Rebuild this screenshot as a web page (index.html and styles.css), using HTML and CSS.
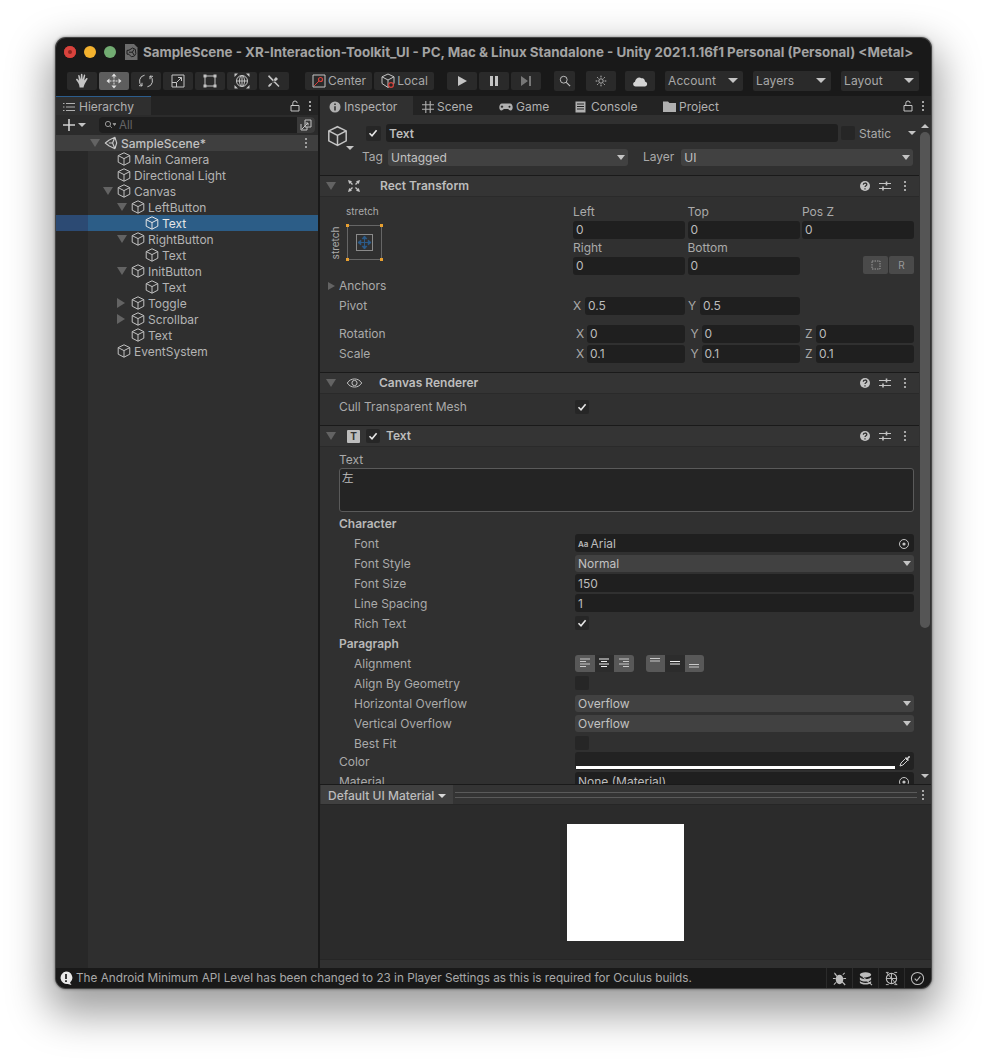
FILE: index.html
```html
<!DOCTYPE html>
<html lang="en">
<head>
<meta charset="utf-8">
<title>Unity Editor</title>
<link rel="stylesheet" href="styles.css">
</head>
<body>
<svg class="sprite" xmlns="http://www.w3.org/2000/svg">
  <symbol id="cube" viewBox="0 0 14 14"><path d="M7 .8 12.800 3.600V10.200L7 13.200 1.200 10.200V3.600ZM1.200 3.600 7 6.600 12.800 3.600M7 6.600V13.200" fill="none" stroke="currentColor" stroke-width="1"/></symbol>
  <symbol id="unity" viewBox="0 0 16 16"><path d="M1.500 8 6 4.500 12.500 1.500 14.500 8 12.500 14.500 6 11.500ZM5.500 8H9.800M9.800 8 12.500 1.500M9.800 8 12.500 14.500" fill="none" stroke="currentColor" stroke-width="1.300" stroke-linejoin="round"/></symbol>
  <symbol id="dots" viewBox="0 0 4 12"><circle cx="2" cy="2" r="1.100" fill="currentColor"/><circle cx="2" cy="6" r="1.100" fill="currentColor"/><circle cx="2" cy="10" r="1.100" fill="currentColor"/></symbol>
  <symbol id="lock" viewBox="0 0 10 12"><path d="M2.800 5V3.200a2.200 2.200 0 0 1 4.400 0M1 5.500h8v5.500H1Z" fill="none" stroke="currentColor" stroke-width="1"/></symbol>
  <symbol id="help" viewBox="0 0 12 12"><circle cx="6" cy="6" r="5" fill="currentColor"/><path d="M4.300 4.700c0-2.200 3.500-2.200 3.500-.2 0 1.300-1.800 1.300-1.800 2.600M6 8.200v1.200" fill="none" stroke="#333" stroke-width="1.300"/></symbol>
  <symbol id="sliders" viewBox="0 0 12 12"><path d="M0 3.500h12M0 8.500h12" stroke="currentColor" stroke-width="1"/><path d="M7.500 1.500v4M4 6.500v4" stroke="currentColor" stroke-width="1.600"/></symbol>
  <symbol id="check" viewBox="0 0 14 14"><path d="M3.500 7.300 6 9.800 10.600 4.200" fill="none" stroke="currentColor" stroke-width="1.600"/></symbol>
</svg>

<main class="window">
  <header class="titlebar">
    <div class="lights"><span class="light red"></span><span class="light yellow"></span><span class="light green"></span></div>
    <svg class="doc" viewBox="0 0 14 16"><path d="M1 0H10L13.500 3.500V16H1Z" fill="#6c6c6c"/><path d="M8.600 4 11.400 5.400 11.800 9.600 10.400 12 7.400 12.800 4.800 10.200H3V6.400L5 6.200ZM5 8.200H8.400L10 5.400M8.400 8.200 10 11" fill="none" stroke="#1d1d1d" stroke-width="1"/></svg>
    <h1 class="wintitle">SampleScene - XR-Interaction-Toolkit_UI - PC, Mac &amp; Linux Standalone - Unity 2021.1.16f1 Personal (Personal) &lt;Metal&gt;</h1>
  </header>

  <nav class="toolbar">
    <div class="toolgroup">
      <button class="tool"><svg viewBox="0 0 16 16" class="ti"><path d="M4 9.500 2.200 7C1.600 6 3 5.400 3.700 6.200L5 7.800 4.200 2.800C4 1.800 5.400 1.600 5.600 2.600L6.600 6.600 6.900 1.500C7 .5 8.400 .5 8.400 1.500L8.600 6.600 9.800 2.200C10.100 1.200 11.400 1.600 11.200 2.600L10.200 7.400 12 5.400C12.800 4.600 14 5.400 13.400 6.300L10.800 10.800C10 12.500 9.600 13.500 9.600 14.600H5.600C5.400 12.600 5 11 4 9.500Z" fill="#c4c4c4"/></svg></button>
      <button class="tool active"><svg viewBox="0 0 16 16" class="ti"><path d="M8 3.500v9M3.500 8h9" stroke="#dcdcdc" stroke-width="1" stroke-dasharray="2 1"/><path d="M8 .5 5.500 3.500h5ZM8 15.500l-2.500-3h5ZM.5 8l3-2.500v5ZM15.500 8l-3-2.500v5Z" fill="#e2e2e2"/></svg></button>
      <button class="tool"><svg viewBox="0 0 16 16" class="ti"><path d="M6.600 2.200A6 6 0 0 0 4 13M9.400 13.800A6 6 0 0 0 12 3M12 3V6.200M12 3 15 3.400M4 13V9.800M4 13 1 12.600" fill="none" stroke="#c4c4c4" stroke-width="1"/></svg></button>
      <button class="tool"><svg viewBox="0 0 16 16" class="ti"><path d="M2 2H14V14H2ZM2 9.500H6.500V14M6.500 9.500 11.500 4.500M8 4.500H11.500V8" fill="none" stroke="#c4c4c4" stroke-width="1"/></svg></button>
      <button class="tool"><svg viewBox="0 0 16 16" class="ti"><path d="M3 3h10v10H3Z" fill="none" stroke="#c4c4c4" stroke-width="1"/><path d="M1.500 1.500h3v3h-3ZM11.500 1.500h3v3h-3ZM1.500 11.500h3v3h-3ZM11.500 11.500h3v3h-3Z" fill="#c4c4c4"/></svg></button>
      <button class="tool"><svg viewBox="0 0 16 16" class="ti"><circle cx="8" cy="8" r="5.500" fill="none" stroke="#c4c4c4"/><path d="M8 2.500v11M2.500 8h11M5.500 8a2.500 5.500 0 0 1 5 0M5.500 8a2.500 5.500 0 0 0 5 0" fill="none" stroke="#c4c4c4"/><path d="M12 .5h3.500V4ZM4 .5H.5V4ZM12 15.500h3.500V12ZM4 15.500H.5V12Z" fill="#c4c4c4"/></svg></button>
      <button class="tool"><svg viewBox="0 0 16 16" class="ti"><path d="M3 2 13.500 13 12.500 14 2 3.500ZM13.500 2.500 11 5 10 4 8.500 5.500 5 12.500 3 14 2 13 3.500 11 10.500 7.500 12 6 11 5Z" fill="#c4c4c4"/></svg></button>
    </div>
    <div class="pivotgroup">
      <button class="tool pivot center-btn"><svg viewBox="0 0 16 16" class="ti"><path d="M2 2h12v12H2Z" fill="none" stroke="#c4c4c4"/><path d="M3 13 8 8" stroke="#d8433d"/><circle cx="9.500" cy="6.500" r="2" fill="none" stroke="#d8433d" stroke-width="1.200"/></svg>Center</button>
      <button class="tool pivot local-btn"><svg viewBox="0 0 16 16" class="ti"><path d="M8 1 14 3.800V10.500L8 14.500 2 10.500V3.800ZM2 3.800 8 7 14 3.800M8 7v7" fill="none" stroke="#c4c4c4"/><circle cx="11" cy="12" r="2.400" fill="#242424" stroke="#d8433d" stroke-width="1.200"/></svg>Local</button>
    </div>
    <div class="playgroup">
      <button class="tool"><svg viewBox="0 0 12 12" class="pi"><path d="M2 1 11 6 2 11Z" fill="#c4c4c4"/></svg></button>
      <button class="tool"><svg viewBox="0 0 12 12" class="pi"><path d="M2 1h3v10H2ZM7 1h3v10H7Z" fill="#c4c4c4"/></svg></button>
      <button class="tool"><svg viewBox="0 0 12 12" class="pi"><path d="M1 1 8 6 1 11ZM9 1h2v10H9Z" fill="#777"/></svg></button>
    </div>
    <button class="tool search-btn"><svg viewBox="0 0 14 14" class="pi"><circle cx="5.500" cy="5.500" r="4" fill="none" stroke="#c4c4c4" stroke-width="1.100"/><path d="M8.500 8.500 13 13" stroke="#c4c4c4" stroke-width="1.300"/></svg></button>
    <button class="tool sun-btn"><svg viewBox="0 0 14 14" class="pi"><circle cx="7" cy="7" r="2.600" fill="none" stroke="#c4c4c4"/><path d="M7 .8v2M7 11.200v2M.8 7h2M11.200 7h2M2.600 2.600 4 4M10 10l1.400 1.400M2.600 11.400 4 10M10 4l1.400-1.400" stroke="#c4c4c4" stroke-width="1.100"/></svg></button>
    <button class="tool cloud-btn"><svg viewBox="0 0 16 12" class="ci"><path d="M3.600 11.500C.8 11.500 .2 7.500 3 6.800 3.400 3.400 6.800 1.600 9.400 3.200 12.800 2.800 13 6 13 6.600 16 7.200 15.800 11.500 12.800 11.500Z" fill="#d4d4d4"/></svg></button>
    <div class="tool menu account"><span>Account</span><i class="caret"></i></div>
    <div class="tool menu layers"><span>Layers</span><i class="caret"></i></div>
    <div class="tool menu layout"><span>Layout</span><i class="caret"></i></div>
  </nav>

  <div class="panels">
    <section class="hierarchy">
      <div class="tabs">
        <div class="tab tab-h selected-tab">
          <svg viewBox="0 0 12 10" class="tabicon"><path d="M3 1.500h9M3 5h9M3 8.500h9" stroke="currentColor"/><path d="M0 1h1.500v1H0ZM0 4.500h1.500v1H0ZM0 8h1.500v1H0Z" fill="currentColor"/></svg>Hierarchy
        </div>
        <div class="tabspace"></div>
        <svg class="lockicon"><use href="#lock"/></svg>
        <svg class="dotsicon"><use href="#dots"/></svg>
      </div>
      <div class="hbar">
        <svg viewBox="0 0 12 12" class="plus"><path d="M6 0v12M0 6h12" stroke="#d0d0d0" stroke-width="1.600"/></svg>
        <i class="caret small"></i>
        <div class="hsearch">
          <svg viewBox="0 0 12 10" class="mag"><circle cx="4" cy="4" r="2.600" fill="none" stroke="#999"/><path d="M6 6 8 8M9 3.500h3L10.500 5.500Z" stroke="#999" fill="#999" stroke-width=".8"/></svg>
          <span class="hplace">All</span>
          <span class="hsearchbtn"><svg viewBox="0 0 12 12"><path d="M1 5v6h6V8M5 8V1h6v7ZM2 10 8 4M8 4H5.600M8 4v2.400" fill="none" stroke="#c4c4c4"/></svg></span>
        </div>
      </div>
      <div class="scene-row">
        <i class="arrow-d dim"></i>
        <svg class="uicon"><use href="#unity"/></svg>
        <span>SampleScene*</span>
        <svg class="scene-dots"><use href="#dots"/></svg>
      </div>
      <div class="tree">
        <div class="node l1"><i class="slot"></i><svg class="cube"><use href="#cube"/></svg><span>Main Camera</span></div>
        <div class="node l1"><i class="slot"></i><svg class="cube"><use href="#cube"/></svg><span>Directional Light</span></div>
        <div class="node l1"><i class="slot"><i class="arrow-d"></i></i><svg class="cube"><use href="#cube"/></svg><span>Canvas</span></div>
        <div class="node l2"><i class="slot"><i class="arrow-d"></i></i><svg class="cube"><use href="#cube"/></svg><span>LeftButton</span></div>
        <div class="node l3 sel"><i class="slot"></i><svg class="cube"><use href="#cube"/></svg><span>Text</span></div>
        <div class="node l2"><i class="slot"><i class="arrow-d"></i></i><svg class="cube"><use href="#cube"/></svg><span>RightButton</span></div>
        <div class="node l3"><i class="slot"></i><svg class="cube"><use href="#cube"/></svg><span>Text</span></div>
        <div class="node l2"><i class="slot"><i class="arrow-d"></i></i><svg class="cube"><use href="#cube"/></svg><span>InitButton</span></div>
        <div class="node l3"><i class="slot"></i><svg class="cube"><use href="#cube"/></svg><span>Text</span></div>
        <div class="node l2"><i class="slot"><i class="arrow-r"></i></i><svg class="cube"><use href="#cube"/></svg><span>Toggle</span></div>
        <div class="node l2"><i class="slot"><i class="arrow-r"></i></i><svg class="cube"><use href="#cube"/></svg><span>Scrollbar</span></div>
        <div class="node l2"><i class="slot"></i><svg class="cube"><use href="#cube"/></svg><span>Text</span></div>
        <div class="node l1"><i class="slot"></i><svg class="cube"><use href="#cube"/></svg><span>EventSystem</span></div>
      </div>
    </section>

    <section class="rightpanel">
      <div class="tabs">
        <div class="tab tab-i selected-tab2">
          <svg viewBox="0 0 12 12" class="tabicon tabicon-i"><circle cx="6" cy="6" r="5.500" fill="currentColor"/><path d="M6 2.400v1.600M6 5.200v4.200" stroke="#333" stroke-width="1.600"/></svg>Inspector
        </div>
        <div class="tab tab-s"><svg viewBox="0 0 12 12" class="tabicon tabicon-i"><path d="M3.800 0v12M8.200 0v12M0 3.800h12M0 8.200h12" stroke="currentColor" stroke-width="1.100"/></svg>Scene</div>
        <div class="tab tab-g"><svg viewBox="0 0 14 8" class="gameicon"><path d="M3 .5h8c3.400 0 3.600 7 .6 7-1.400 0-1.600-1.600-3-1.600H5.400c-1.400 0-1.600 1.600-3 1.600C-.6 7.500-.4 .5 3 .5Z" fill="currentColor"/><path d="M3 2.500v2.500M1.800 3.700h2.400" stroke="#222"/><circle cx="10.500" cy="3.700" r="1" fill="#222"/></svg>Game</div>
        <div class="tab tab-c"><svg viewBox="0 0 11 12" class="tabicon tabicon-c"><path d="M.5 .5h10v11H.5Z" fill="currentColor"/><path d="M2 3h7M2 5.500h7M2 8h7" stroke="#222"/></svg>Console</div>
        <div class="tab tab-p"><svg viewBox="0 0 13 11" class="tabicon tabicon-p"><path d="M0 .5h5L6.500 2H13v9H0Z" fill="currentColor"/></svg>Project</div>
        <div class="tabspace"></div>
        <svg class="lockicon"><use href="#lock"/></svg>
        <svg class="dotsicon"><use href="#dots"/></svg>
      </div>

      <div class="inspector-wrap">
        <div class="inspector">
          <div class="objhead">
            <div class="objrow">
              <svg class="bigcube"><use href="#cube"/></svg>
              <span class="check on chk-obj"><svg><use href="#check"/></svg></span>
              <div class="field namefield strong">Text</div>
              <span class="check static-chk"></span>
              <span class="lbl static-lbl">Static</span>
              <i class="caret static-caret"></i>
            </div>
            <div class="tagrow">
              <i class="caret small bigcube-caret"></i>
              <span class="lbl tag-lbl">Tag</span>
              <div class="drop tagdrop"><span>Untagged</span><i class="caret"></i></div>
              <span class="lbl layer-lbl">Layer</span>
              <div class="drop layerdrop"><span>UI</span><i class="caret"></i></div>
            </div>
          </div>

          <div class="comphead">
            <i class="arrow-d dim"></i>
            <svg viewBox="0 0 14 14" class="compicon"><path d="M1 1 5 2.200 2.200 5ZM13 1 11.800 5 9 2.200ZM1 13 2.200 9 5 11.800ZM13 13 9 11.800 11.800 9Z" fill="#c4c4c4"/><path d="M3 3 5.500 5.500M11 3 8.500 5.500M3 11 5.500 8.500M11 11 8.500 8.500" stroke="#c4c4c4" stroke-width="1.400"/></svg>
            <span class="comptitle">Rect Transform</span>
            <svg class="hicon"><use href="#help"/></svg><svg class="hicon sl"><use href="#sliders"/></svg><svg class="hdots"><use href="#dots"/></svg>
          </div>
          <div class="rect-body">
            <div class="rect-top">
              <div class="anchor">
                <span class="stretch-h">stretch</span>
                <span class="stretch-v">stretch</span>
                <div class="anchorbox">
                  <i class="pin p1"></i><i class="pin p2"></i><i class="pin p3"></i><i class="pin p4"></i>
                  <div class="anchorinner"><svg viewBox="0 0 16 16"><path d="M8 1v14M1 8h14M8 1 5.500 4h5ZM8 15l-2.500-3h5ZM1 8l3-2.500v5ZM15 8l-3-2.500v5Z" fill="#2c5d8d" stroke="#2c5d8d"/></svg></div>
                </div>
              </div>
              <div class="rectgrid">
                <label class="cap">Left</label><label class="cap">Top</label><label class="cap">Pos Z</label>
                <div class="field">0</div><div class="field">0</div><div class="field">0</div>
                <label class="cap">Right</label><label class="cap">Bottom</label><span></span>
                <div class="field">0</div><div class="field">0</div>
                <div class="bpbtns"><span class="bp"><svg viewBox="0 0 10 10"><path d="M1 1h8v8H1Z" fill="none" stroke="#999" stroke-dasharray="1.500 1"/></svg></span><span class="bp">R</span></div>
              </div>
            </div>
            <div class="row anchors-row"><i class="arrow-r anchors-arrow"></i><span class="lbl">Anchors</span></div>
            <div class="row xy pivot-row">
              <span class="lbl">Pivot</span>
              <div class="xyf"><b>X</b><div class="field">0.5</div></div>
              <div class="xyf"><b>Y</b><div class="field">0.5</div></div>
            </div>
            <div class="row xyz rot-row">
              <span class="lbl">Rotation</span>
              <div class="xyf"><b>X</b><div class="field">0</div></div>
              <div class="xyf"><b>Y</b><div class="field">0</div></div>
              <div class="xyf"><b>Z</b><div class="field">0</div></div>
            </div>
            <div class="row xyz">
              <span class="lbl">Scale</span>
              <div class="xyf"><b>X</b><div class="field">0.1</div></div>
              <div class="xyf"><b>Y</b><div class="field">0.1</div></div>
              <div class="xyf"><b>Z</b><div class="field">0.1</div></div>
            </div>
          </div>

          <div class="comphead">
            <i class="arrow-d dim"></i>
            <svg viewBox="0 0 16 12" class="compicon eye"><path d="M.8 6C4 .6 12 .6 15.200 6 12 11.400 4 11.400 .8 6Z" fill="none" stroke="#c4c4c4"/><circle cx="8" cy="6" r="2.600" fill="none" stroke="#c4c4c4"/></svg>
            <span class="comptitle">Canvas Renderer</span>
            <svg class="hicon"><use href="#help"/></svg><svg class="hicon sl"><use href="#sliders"/></svg><svg class="hdots"><use href="#dots"/></svg>
          </div>
          <div class="canvas-body">
            <div class="row prop"><span class="lbl">Cull Transparent Mesh</span><span class="check on"><svg><use href="#check"/></svg></span></div>
          </div>

          <div class="comphead text-head">
            <i class="arrow-d dim"></i>
            <span class="ticon">T</span>
            <span class="check on chk-text"><svg><use href="#check"/></svg></span>
            <span class="comptitle short">Text</span>
            <svg class="hicon"><use href="#help"/></svg><svg class="hicon sl"><use href="#sliders"/></svg><svg class="hdots"><use href="#dots"/></svg>
          </div>
          <div class="text-body">
            <div class="lbl textcap">Text</div>
            <div class="textarea">左</div>
            <div class="row prop"><span class="lbl strong-lbl">Character</span></div>
            <div class="row prop in"><span class="lbl">Font</span><div class="field objfield"><span class="aa">Aa</span>Arial<svg viewBox="0 0 12 12" class="target"><circle cx="6" cy="6" r="4.500" fill="none" stroke="#c4c4c4"/><circle cx="6" cy="6" r="1.600" fill="#c4c4c4"/></svg></div></div>
            <div class="row prop in"><span class="lbl">Font Style</span><div class="drop"><span>Normal</span><i class="caret"></i></div></div>
            <div class="row prop in"><span class="lbl">Font Size</span><div class="field">150</div></div>
            <div class="row prop in"><span class="lbl">Line Spacing</span><div class="field">1</div></div>
            <div class="row prop in"><span class="lbl">Rich Text</span><span class="check on"><svg><use href="#check"/></svg></span></div>
            <div class="row prop"><span class="lbl strong-lbl">Paragraph</span></div>
            <div class="row prop in"><span class="lbl">Alignment</span>
              <div class="aligns">
                <div class="aligngroup">
                  <span class="al"><svg viewBox="0 0 12 10"><path d="M1 1h10M1 3.500h6M1 6h10M1 8.500h6" stroke="#c8c8c8"/></svg></span>
                  <span class="al on"><svg viewBox="0 0 12 10"><path d="M1 1h10M3 3.500h6M1 6h10M3 8.500h6" stroke="#eee"/></svg></span>
                  <span class="al"><svg viewBox="0 0 12 10"><path d="M1 1h10M5 3.500h6M1 6h10M5 8.500h6" stroke="#c8c8c8"/></svg></span>
                </div>
                <div class="aligngroup">
                  <span class="al"><svg viewBox="0 0 12 10"><path d="M1 .5h10M1 3h10" stroke="#c8c8c8"/></svg></span>
                  <span class="al on"><svg viewBox="0 0 12 10"><path d="M1 3.500h10M1 6h10" stroke="#eee"/></svg></span>
                  <span class="al"><svg viewBox="0 0 12 10"><path d="M1 6.500h10M1 9h10" stroke="#c8c8c8"/></svg></span>
                </div>
              </div>
            </div>
            <div class="row prop in"><span class="lbl">Align By Geometry</span><span class="check"></span></div>
            <div class="row prop in"><span class="lbl">Horizontal Overflow</span><div class="drop"><span>Overflow</span><i class="caret"></i></div></div>
            <div class="row prop in"><span class="lbl">Vertical Overflow</span><div class="drop"><span>Overflow</span><i class="caret"></i></div></div>
            <div class="row prop in"><span class="lbl">Best Fit</span><span class="check"></span></div>
            <div class="row prop color-row"><span class="lbl">Color</span><div class="colorfield"><span class="swatch"><i></i></span><svg viewBox="0 0 12 12" class="dropper"><path d="M1 11 2 8 6.500 3.500 8.500 5.500 4 10Z" fill="none" stroke="#d0d0d0"/><path d="M6 3 7 2 8 3 9.500 1.200C10.500 .5 11.500 1.500 10.800 2.500L9 4 10 5 9 6Z" fill="#d0d0d0"/></svg></div></div>
            <div class="row prop"><span class="lbl">Material</span><div class="field objfield">None (Material)<svg viewBox="0 0 12 12" class="target"><circle cx="6" cy="6" r="4.500" fill="none" stroke="#c4c4c4"/><circle cx="6" cy="6" r="1.600" fill="#c4c4c4"/></svg></div></div>
          </div>
        </div>
        <div class="scrollbar">
          <i class="sb-up"></i>
          <div class="sb-track"><div class="sb-thumb"></div></div>
          <i class="sb-down"></i>
        </div>
      </div>

      <div class="preview-head">
        <div class="preview-btn">Default UI Material<i class="caret small white"></i></div>
        <div class="drag-lines"></div>
        <svg class="preview-dots"><use href="#dots"/></svg>
      </div>
      <div class="preview-body"><div class="white-square"></div></div>
      <div class="preview-foot"></div>
    </section>
  </div>

  <footer class="statusbar">
    <svg viewBox="0 0 14 14" class="alert"><path d="M7 .5a6.300 6.300 0 0 1 4 11.200L12.500 14 8.800 13A6.300 6.300 0 1 1 7 .5Z" fill="#e8e8e8"/><path d="M7 3v5M7 9.300v1.600" stroke="#191919" stroke-width="1.700"/></svg>
    <span class="statustext">The Android Minimum API Level has been changed to 23 in Player Settings as this is required for Oculus builds.</span>
    <span class="status-icon"><svg viewBox="0 0 16 16"><ellipse cx="8" cy="9" rx="4" ry="5" fill="#bdbdbd"/><path d="M4.500 4 2.500 2M11.500 4l2-2M4 8H1M12 8h3M4.500 12 2 14.500M11.500 12 14 14.500M3 3 14 15" stroke="#bdbdbd" stroke-width="1.100"/></svg></span>
    <span class="status-icon"><svg viewBox="0 0 16 16"><ellipse cx="8" cy="4" rx="6" ry="2.800" fill="#bdbdbd"/><path d="M2 6.500c1 3 11 3 12 0V9c-1 3-11 3-12 0ZM2 10.500c1 3 11 3 12 0V12.500c-1 2.500-11 2.500-12 0Z" fill="#bdbdbd"/><path d="M5 6 15 15" stroke="#bdbdbd" stroke-width="1.100"/></svg></span>
    <span class="status-icon"><svg viewBox="0 0 16 16"><circle cx="8" cy="8" r="5.500" fill="none" stroke="#bdbdbd" stroke-width="1.200"/><path d="M8 2.500v11M2.500 8h11M2 1.500h3M11 1.500h3M2 14.500h3M11 14.500h3M3 2 14 15" stroke="#bdbdbd"/></svg></span>
    <span class="status-icon"><svg viewBox="0 0 16 16"><circle cx="8" cy="8" r="6.500" fill="none" stroke="#bdbdbd" stroke-width="1.100"/><path d="M5 8.200 7.200 10.400 11 5.800" fill="none" stroke="#bdbdbd" stroke-width="1.200"/></svg></span>
  </footer>
</main>
</body>
</html>
```
FILE: styles.css
```css
* { box-sizing: border-box; }
html, body { margin: 0; height: 1062px; overflow: hidden; background: #fff; }
body { padding: 38px 56px 0; font: 12px/16px Inter, "Noto Sans CJK JP", sans-serif; color: #b8b8b8; }
.sprite { display: none; }
svg { display: block; flex: none; }
i { display: block; flex: none; font-style: normal; }

.window {
  width: 875px; height: 950px; background: #191919; border-radius: 10px; overflow: hidden;
  display: flex; flex-direction: column;
  box-shadow: 0 0 0 1px #444, 0 0 3px 1px rgba(0,0,0,.5), 0 18px 40px 8px rgba(0,0,0,.38);
}

/* title bar */
.titlebar { height: 28px; display: flex; align-items: center; padding-left: 8px; flex: none; }
.lights { display: flex; gap: 8px; }
.light { width: 12px; height: 12px; border-radius: 50%; display: block; }
.red { background: #d8433d; box-shadow: inset 0 0 0 4px #d8433d, inset 0 0 0 6px #8c2520; }
.yellow { background: #f4b22e; }
.green { background: #72ac72; }
.doc { width: 14px; height: 16px; margin-left: 8px; }
.wintitle { margin: 0 0 0 5px; font: 700 13.360px/16px Inter, sans-serif; color: #a3a3a3; white-space: nowrap; }

/* toolbar */
.toolbar { height: 30px; flex: none; display: flex; align-items: center; padding: 0 0 1px 11px; }
.tool { border: 0; padding: 0; margin: 0; width: 30px; height: 18px; background: #2a2a2a; border-radius: 2px; display: flex; align-items: center; justify-content: center; color: #a8a8a8; font: 12px/16px Inter, sans-serif; }
.tool.active { background: #5e5e5e; }
.ti { width: 16px; height: 16px; }
.pi { width: 12px; height: 12px; }
.ci { width: 16px; height: 12px; }
.toolgroup, .pivotgroup, .playgroup { display: flex; gap: 2px; }
.pivotgroup { margin-left: 16px; }
.playgroup { margin-left: 13px; }
.pivot { gap: 1px; }
.center-btn { width: 67px; }
.local-btn { width: 60px; }
.search-btn { width: 21px; height: 20px; margin-left: 13px; }
.sun-btn { margin-left: 11px; height: 20px; }
.cloud-btn { margin-left: 9px; height: 20px; }
.menu { width: 78px; height: 20px; margin-left: 10px; justify-content: space-between; padding: 0 5px 0 3px; letter-spacing: .1px; }
.account { margin-left: 10px; }
.caret { width: 0; height: 0; border-left: 5px solid transparent; border-right: 5px solid transparent; border-top: 5px solid #c4c4c4; }
.caret.small { border-left-width: 4px; border-right-width: 4px; border-top-width: 4px; }
.caret.white { border-top-color: #d8d8d8; }

/* panels */
.panels { flex: 1; display: flex; min-height: 0; }
.hierarchy { width: 262px; flex: none; background: #2f2f2f; display: flex; flex-direction: column; }
.rightpanel { width: 611px; margin-left: 2px; flex: none; background: #303030; display: flex; flex-direction: column; }
.tabs { height: 19px; flex: none; display: flex; align-items: center; background: #232323; color: #b0b0b0; padding-right: 2px; font-size: 12px; }
.tab { height: 19px; display: flex; align-items: center; color: #b0b0b0; padding-top: 2px; }
.tabspace { flex: 1; }
.tabicon { width: 12px; height: 10px; margin-right: 4px; }
.tabicon-i { height: 12px; margin-right: 3px; }
.tabicon-c { width: 11px; height: 12px; margin-right: 5px; }
.tabicon-p { width: 13px; height: 11px; margin-right: 3px; }
.gameicon { width: 14px; height: 8px; margin-right: 3px; }
.tab-h { width: 95px; padding-left: 7px; padding-top: 1px; background: #2f2f2f; border-top: 1px solid #2c5d8d; }
.tab-i { width: 93px; padding-left: 9px; background: #303030; }
.tab-s { width: 86px; padding-left: 9px; }
.tab-g { width: 76px; padding-left: 0; }
.tab-c { width: 88px; }
.tab-p { width: 80px; }
.lockicon { width: 10px; height: 12px; margin-right: 8px; color: #c4c4c4; }
.dotsicon { width: 4px; height: 12px; margin-right: 4px; color: #c4c4c4; }

/* hierarchy */
.hbar { height: 20px; flex: none; display: flex; align-items: center; padding-left: 7px; background: #2b2b2b; }
.plus { width: 12px; height: 12px; }
.hbar .caret { margin-left: 3px; }
.hsearch { margin-left: 13px; width: 216px; height: 16px; border-radius: 4px; background: #1e1e1e; display: flex; align-items: center; padding-left: 5px; color: #666; }
.mag { width: 12px; height: 10px; }
.hplace { margin-left: 3px; flex: 1; font-size: 11.500px; }
.hsearchbtn { width: 18px; height: 16px; background: #3a3a3a; border-radius: 0 4px 4px 0; display: flex; align-items: center; justify-content: center; }
.hsearchbtn svg { width: 12px; height: 12px; }
.scene-row { height: 16px; flex: none; display: flex; align-items: center; padding-left: 34px; background: #3f3f3f; color: #c2c2c2; font-weight: 500; font-size: 12px; }
.arrow-d { width: 0; height: 0; border-left: 5px solid transparent; border-right: 5px solid transparent; border-top: 8px solid #636363; }
.arrow-r { width: 0; height: 0; border-top: 5px solid transparent; border-bottom: 5px solid transparent; border-left: 8px solid #636363; }
.uicon { width: 14px; height: 14px; margin-left: 4px; color: #c8c8c8; }
.scene-row span { margin-left: 3px; flex: 1; padding-top: 1px; }
.scene-dots { width: 4px; height: 12px; margin-right: 10px; color: #b8b8b8; }
.tree { flex: 1; background: linear-gradient(90deg, #282828 32px, #2f2f2f 32px); }
.node { height: 16px; display: flex; align-items: center; font-size: 12px; color: #b4b4b4; }
.slot { width: 14px; display: flex; justify-content: flex-start; }
.cube { width: 14px; height: 14px; color: #c2c2c2; }
.node span { margin-left: 3px; padding-top: 1px; }
.l1 { padding-left: 47px; }
.l2 { padding-left: 61px; }
.l3 { padding-left: 75px; }
.sel { background: linear-gradient(90deg, #2c4a73 32px, #2c5d87 32px); color: #e6e6e6; }
.sel .cube { color: #e6e6e6; }

/* inspector */
.inspector-wrap { height: 669px; flex: none; display: flex; overflow: hidden; }
.inspector { width: 599px; flex: none; }
.objhead { height: 61px; border-bottom: 1px solid #1a1a1a; padding-top: 9px; }
.objrow { display: flex; align-items: center; height: 18px; padding-left: 7px; }
.bigcube { width: 21px; height: 22px; margin-top: 5px; color: #c4c4c4; }
.check { display: flex; width: 14px; height: 14px; border-radius: 2px; background: #262626; color: #e6e6e6; flex: none; }
.check svg { width: 14px; height: 14px; }
.chk-obj { margin-left: 18px; width: 15px; height: 15px; }
.field { height: 18px; background: #1f1f1f; border-radius: 3px; padding-left: 3px; line-height: 18px; color: #bcbcbc; font-size: 12px; min-width: 0; }
.strong { font-weight: 600; }
.namefield { width: 452px; margin-left: 5px; line-height: 19px; }
.static-chk { margin-left: 3px; }
.static-lbl { margin-left: 4px; line-height: 19px; }
.static-caret { margin-left: 17px; border-left-width: 4px; border-right-width: 4px; border-top-width: 4px; }
.lbl { font-size: 12px; color: #aaa; white-space: nowrap; }
.tagrow { display: flex; align-items: center; height: 18px; margin-top: 6px; padding-left: 26px; }
.bigcube-caret { margin-top: -18px; }
.tag-lbl { margin-left: 8px; }
.drop { height: 17px; background: #414141; border-radius: 3px; display: flex; justify-content: space-between; align-items: center; padding: 0 3px; font-size: 12px; color: #c2c2c2; line-height: 17px; }
.tagdrop { width: 240px; margin-left: 5px; }
.layer-lbl { margin-left: 15px; }
.layerdrop { width: 232px; margin-left: 7px; }
.drop .caret { border-left-width: 4px; border-right-width: 4px; border-top-width: 5px; }

.comphead { height: 21px; display: flex; align-items: center; padding-left: 6px; background: #343434; border-bottom: 1px solid #2a2a2a; }
.compicon { width: 14px; height: 14px; margin-left: 11px; }
.compicon.eye { width: 17px; height: 12px; margin-left: 10px; }
.comptitle { font-weight: 600; font-size: 12px; color: #bdbdbd; margin-left: 19px; flex: 1; }
.comphead .eye + .comptitle { margin-left: 16px; }
.hicon { width: 12px; height: 12px; color: #c4c4c4; margin-right: 8px; }
.hicon.sl { margin-right: 12px; }
.hdots { width: 4px; height: 12px; color: #c4c4c4; margin-right: 12px; }
.comptitle.short { margin-left: 6px; }
.ticon { width: 13px; height: 13px; margin-left: 11px; background: #bdbdbd; color: #333; font: 700 10px/13px Inter, sans-serif; text-align: center; border-radius: 1px; }
.chk-text { margin-left: 6px; }

.rect-body { height: 176px; border-bottom: 1px solid #1a1a1a; padding-top: 6px; }
.rect-top { display: flex; height: 72px; }
.anchor { width: 253px; height: 72px; position: relative; flex: none; }
.stretch-h { position: absolute; left: 26px; top: 0; font-size: 10px; color: #aaa; }
.stretch-v { position: absolute; left: 15px; top: 40px; font-size: 10px; color: #aaa; transform: rotate(-90deg) translate(-50%,-50%); transform-origin: 0 0; line-height: 14px; }
.anchorbox { position: absolute; left: 27px; top: 22px; width: 35px; height: 35px; border: 1px solid #666; }
.pin { position: absolute; width: 3px; height: 3px; background: #e8a030; }
.p1 { left: -2px; top: -2px; } .p2 { right: -2px; top: -2px; } .p3 { left: -2px; bottom: -2px; } .p4 { right: -2px; bottom: -2px; }
.anchorinner { margin: 8px 0 0 8px; width: 17px; height: 17px; border: 1px solid #8a8a8a; }
.anchorinner svg { width: 15px; height: 15px; }
.rectgrid { display: grid; grid-template-columns: 112px 112px 112px; column-gap: 2.500px; grid-auto-rows: 18px; }
.cap { font-size: 12px; color: #aaa; line-height: 18px; }
.bpbtns { display: flex; justify-content: flex-end; gap: 1px; margin-top: -1px; }
.bp { width: 25px; height: 18px; background: #4a4a4a; display: flex; align-items: center; justify-content: center; font-size: 10px; color: #999; border-radius: 2px; }
.bp svg { width: 10px; height: 10px; }
.row { height: 20px; display: flex; align-items: center; }
.row > .lbl:first-child { padding-left: 19px; }
.anchors-row { margin-top: 1px; padding-left: 8px; }
.anchors-row > .lbl:first-child { padding-left: 0; }
.anchors-arrow { border-top-width: 4px; border-bottom-width: 4px; border-left-width: 7px; margin-right: 4px; }
.xy, .xyz { display: grid; align-items: center; }
.xy { grid-template-columns: 250px 112px 112px; column-gap: 3px; }
.xyz { grid-template-columns: 250.500px 109px 109px 109px; column-gap: 5.500px; }
.xyf { display: flex; align-items: center; }
.xyf b { width: 12px; font-weight: 400; font-size: 12px; color: #aaa; flex: none; }
.xyf .field { flex: 1; }
.xyz .xyf b { width: 11px; }
.rot-row { margin-top: 8px; }

.canvas-body { height: 32px; border-bottom: 1px solid #1a1a1a; padding-top: 3px; }
.prop { display: grid; grid-template-columns: 255px 339px; align-items: center; }
.prop.in > .lbl:first-child { padding-left: 34px; }
.text-body { padding-top: 4px; }
.text-body .row > .lbl { margin-top: 2px; }
.text-body .field { line-height: 20px; }
.text-body .objfield { padding-top: 1px; }
.textcap { padding-left: 19px; height: 17px; line-height: 18px; }
.textarea { margin-left: 19px; width: 575px; height: 44px; background: #242424; border: 1px solid #5a5a5a; border-radius: 3px; padding: 1px 2px; font-size: 11.500px; line-height: 16px; color: #bcbcbc; margin-bottom: 1px; }
.strong-lbl { font-weight: 600; color: #b8b8b8; }
.objfield { display: flex; align-items: center; justify-content: flex-start; }
.aa { font-size: 8px; margin-right: 2px; font-weight: 600; }
.target { width: 12px; height: 12px; margin-left: auto; margin-right: 4px; }
.aligns { display: flex; gap: 12px; }
.aligngroup { display: flex; border-radius: 3px; overflow: hidden; }
.al { width: 19.500px; height: 17px; background: #585858; display: flex; align-items: center; justify-content: center; }
.al.on { background: #2c2c2c; }
.al svg { width: 12px; height: 10px; }
.color-row { margin-top: -2px; }
.colorfield { height: 18px; background: #222; border-radius: 3px; display: flex; align-items: stretch; }
.swatch { flex: 1; display: flex; align-items: flex-end; padding: 0 0 1px 1px; }
.swatch i { width: 100%; height: 3px; background: #fff; }
.dropper { width: 12px; height: 12px; margin: 3px 3px 0 4px; }

.scrollbar { width: 12px; flex: none; display: flex; flex-direction: column; align-items: center; background: #303030; padding-top: 9px; }
.sb-up, .sb-down { width: 0; height: 0; border-left: 4px solid transparent; border-right: 4px solid transparent; }
.sb-up { border-bottom: 4px solid #c4c4c4; }
.sb-down { border-top: 4px solid #c4c4c4; }
.sb-track { flex: 1; width: 100%; padding: 4px 1px 0; }
.sb-thumb { height: 496px; background: #555; border-radius: 5px; }
.sb-down { margin-bottom: 6px; }

/* preview */
.preview-head { height: 21px; flex: none; display: flex; align-items: center; background: #343434; border-top: 1px solid #1a1a1a; border-bottom: 1px solid #262626; }
.preview-btn { width: 132px; height: 19px; margin-left: 1px; display: flex; align-items: center; background: #404040; padding-left: 7px; gap: 4px; color: #bcbcbc; font-weight: 500; font-size: 12px; white-space: nowrap; padding-top: 2px; }
.drag-lines { width: 462px; height: 6px; margin-left: 2px; border-top: 1px solid #5a5a5a; border-bottom: 1px solid #5a5a5a; }
.preview-dots { width: 4px; height: 12px; margin-left: 4px; color: #c4c4c4; }
.preview-body { height: 154px; flex: none; background: #2b2b2b; padding-top: 19px; display: flex; justify-content: center; align-items: flex-start; }
.white-square { width: 117px; height: 117px; background: #fff; }
.preview-foot { flex: 1; background: #303030; border-top: 1px solid #262626; }

/* status */
.statusbar { height: 20px; flex: none; display: flex; align-items: center; padding: 0 1px 0 3px; background: #191919; }
.alert { width: 14px; height: 14px; }
.statustext { margin-left: 3px; flex: 1; font-size: 11.750px; color: #a8a8a8; white-space: nowrap; }
.status-icon { width: 26px; height: 20px; border-left: 1px solid #2b2b2b; display: flex; align-items: center; justify-content: center; }
.status-icon svg { width: 15px; height: 15px; }
```
